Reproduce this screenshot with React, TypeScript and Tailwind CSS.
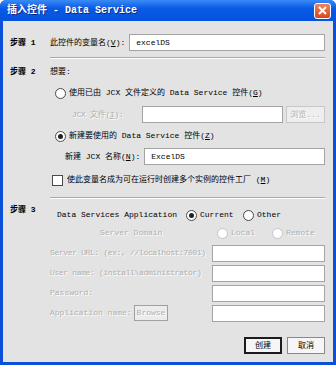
import React from 'react';

const ui = "font-['Liberation_Mono','Noto_Sans_CJK_SC',monospace]";

function Radio({ checked = false, disabled = false }: { checked?: boolean; disabled?: boolean }) {
  return (
    <span
      className={`inline-flex h-[11px] w-[11px] shrink-0 items-center justify-center rounded-full border bg-white ${
        disabled ? 'border-[#c4c4c4]' : 'border-[#4a4a4a]'
      }`}
    >
      {checked && <span className="h-[5px] w-[5px] rounded-full bg-[#222]" />}
    </span>
  );
}

function Field({ value = '', className = '' }: { value?: string; className?: string }) {
  return (
    <div className={`flex h-[17px] items-center border border-[#a4a4a4] bg-white pl-[6px] text-[8px] text-black ${className}`}>
      {value}
    </div>
  );
}

function Sep() {
  return <div className="h-px bg-[#a9a9a9] shadow-[0_1px_0_#ffffff]" />;
}

// label rendered as disabled (embossed grey)
const off = 'text-[#b0b0b0] [text-shadow:1px_1px_0_#fff]';

export default function App() {
  return (
    <div className={`${ui} flex h-[365px] w-[336px] flex-col whitespace-nowrap rounded-t-[6px] bg-[#0b50d8]`}>
      {/* Title bar */}
      <div className="flex h-[21px] items-center justify-between rounded-t-[6px] bg-[linear-gradient(#3a8af6,#0a5ae6_40%,#0552de)] pl-[7px] pr-[5px]">
        <span className="text-[10px] font-bold text-white [text-shadow:1px_1px_0_#0a2a80]">插入控件 - Data Service</span>
        <span className="flex h-[16px] w-[17px] items-center justify-center rounded-[3px] border border-white bg-[linear-gradient(#e9865f,#d6471f)]">
          <svg width="9" height="9" viewBox="0 0 9 9">
            <path d="M1 1L8 8M8 1L1 8" stroke="#fff" strokeWidth="2" />
          </svg>
        </span>
      </div>

      {/* Body */}
      <div className="mx-[3px] mb-[3px] flex flex-1 flex-col bg-[#e3e3e3] pl-[7px] pr-[8px] text-[8px] text-black">
        {/* Step 1 */}
        <div className="mt-[13px] flex h-[17px] items-center">
          <span className="w-[40px] shrink-0 font-bold">步骤 1</span>
          <span>此控件的变量名(<u>V</u>):</span>
          <Field value="excelDS" className="ml-[4px] flex-1" />
        </div>
        <div className="ml-[40px] mt-[6px]">
          <Sep />
        </div>

        {/* Step 2 */}
        <div className="mt-[5px] flex">
          <span className="mt-[1px] flex h-[16px] w-[40px] shrink-0 items-center font-bold">步骤 2</span>
          <div className="flex flex-1 flex-col">
            <div className="mt-[1px] flex h-[16px] items-center">想要:</div>
            <div className="mt-[5px] flex h-[16px] items-center gap-[3px] pl-[5px]">
              <Radio />
              <span>使用已由 JCX 文件定义的 Data Service 控件(<u>G</u>)</span>
            </div>
            <div className="mt-[5px] flex h-[17px] items-center">
              <span className={`w-[92px] shrink-0 pl-[22px] tracking-[-0.3px] ${off}`}>JCX 文件(<u>I</u>):</span>
              <Field className="w-[141px]" />
              <span className={`ml-[3px] flex h-[17px] flex-1 items-center justify-center border border-[#c8c8c8] bg-[#eeeeee] ${off}`}>
                浏览...
              </span>
            </div>
            <div className="mt-[5px] flex h-[16px] items-center gap-[3px] pl-[5px]">
              <Radio checked />
              <span>新建要使用的 Data Service 控件(<u>Z</u>)</span>
            </div>
            <div className="mt-[4px] flex h-[17px] items-center pl-[15px]">
              <span>新建 JCX 名称(<u>N</u>):</span>
              <Field value="ExcelDS" className="ml-[4px] flex-1" />
            </div>
            <div className="mt-[7px] flex h-[16px] items-center gap-[4px] pl-[2px]">
              <span className="h-[11px] w-[11px] shrink-0 border border-[#4a4a4a] bg-white" />
              <span>使此变量名成为可在运行时创建多个实例的控件工厂 (<u>M</u>)</span>
            </div>
            <div className="mt-[9px]">
              <Sep />
            </div>
          </div>
        </div>

        {/* Step 3 */}
        <div className="flex">
          <span className="mt-[4px] flex h-[16px] w-[40px] shrink-0 items-center font-bold">步骤 3</span>
          <div className="mt-[9px] flex flex-1 flex-col">
            <div className="flex h-[16px] items-center pl-[7px]">
              <span className="w-[129px]">Data Services Application</span>
              <Radio checked />
              <span className="ml-[3px] w-[43px]">Current</span>
              <Radio />
              <span className="ml-[3px]">Other</span>
            </div>
            <div className="mt-[2px] flex h-[16px] items-center">
              <span className={`w-[167px] pl-[50px] ${off}`}>Server Domain</span>
              <Radio disabled />
              <span className={`ml-[3px] w-[41px] ${off}`}>Local</span>
              <Radio disabled />
              <span className={`ml-[3px] ${off}`}>Remote</span>
            </div>
            <div className="mt-[4px] flex h-[16px] items-center">
              <span className={`w-[162px] shrink-0 tracking-[-0.35px] ${off}`}>Server URL: (ex:, //localhost:7001)</span>
              <Field className="h-[16px] flex-1" />
            </div>
            <div className="mt-[4px] flex h-[16px] items-center">
              <span className={`w-[162px] shrink-0 tracking-[-0.35px] ${off}`}>User name: (install\administrator)</span>
              <Field className="h-[16px] flex-1" />
            </div>
            <div className="mt-[4px] flex h-[16px] items-center">
              <span className={`w-[162px] shrink-0 ${off}`}>Password:</span>
              <Field className="h-[16px] flex-1" />
            </div>
            <div className="mt-[4px] flex h-[16px] items-center">
              <span className={`w-[84px] shrink-0 ${off}`}>Application name:</span>
              <span className={`flex h-[16px] w-[34px] shrink-0 items-center justify-center border border-[#a0a0a0] bg-[#ececec] ${off}`}>
                Browse
              </span>
              <Field className="ml-[44px] h-[16px] flex-1" />
            </div>
          </div>
        </div>

        {/* Buttons */}
        <div className="mt-[16px] flex justify-end gap-[5px]">
          <span className="flex h-[17px] w-[38px] items-center justify-center border-2 border-[#1c1c1c] bg-[#f6f6f6]">创建</span>
          <span className="flex h-[17px] w-[38px] items-center justify-center border border-[#8a8a8a] bg-[#f6f6f6]">取消</span>
        </div>
      </div>
    </div>
  );
}
